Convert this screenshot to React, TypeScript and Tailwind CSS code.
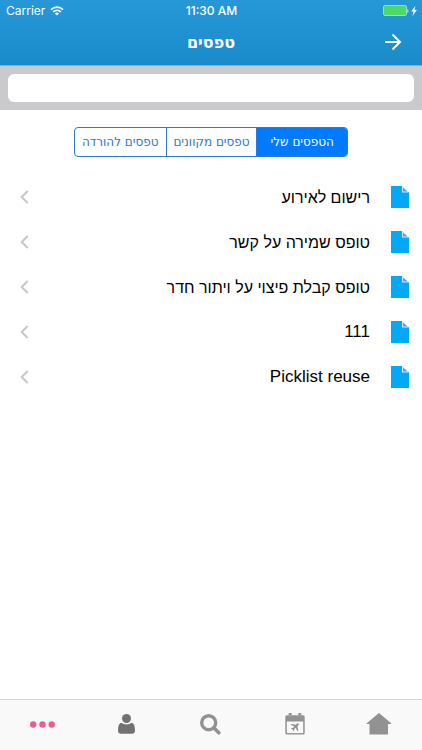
import { useState } from "react"

const tabs = ["הטפסים שלי", "טפסים מקוונים", "טפסים להורדה"]

const forms = [
    { name: "רישום לאירוע", hebrew: true },
    { name: "טופס שמירה על קשר", hebrew: true },
    { name: "טופס קבלת פיצוי על ויתור חדר", hebrew: true },
    { name: "111", hebrew: false },
    { name: "Picklist reuse", hebrew: false },
]

const StatusBar = () => {
    return (
        <div dir="ltr" className="grid grid-cols-3 items-center h-[22px] pl-[6px] pr-[5px] text-xs font-['Inter',sans-serif]">
            <div className="flex items-center gap-[5px]">
                <span>Carrier</span>
                <svg width="14" height="10" viewBox="0 0 14 10" fill="none" stroke="currentColor" strokeWidth="1.6">
                    <path d="M1 3.6C4.4 .3 9.6 .3 13 3.6" />
                    <path d="M3.2 5.9C5.4 3.8 8.6 3.8 10.8 5.9" />
                    <path d="M7 9.6 4.9 7.4C6.1 6.3 7.9 6.3 9.1 7.4Z" fill="currentColor" stroke="none" />
                </svg>
            </div>
            <span className="text-center font-medium">11:30 AM</span>
            <div className="flex items-center justify-end gap-[2px]">
                <svg width="26" height="12" viewBox="0 0 26 12">
                    <rect x=".5" y=".5" width="23" height="10" rx="1.5" fill="#4cd964" stroke="#9ad7d8" />
                    <path d="M24.4 4v4c1.4-.5 1.4-3.500 0-4Z" fill="#d5edf8" />
                </svg>
                <svg width="6" height="10" viewBox="0 0 6 10" fill="currentColor">
                    <path d="M4.300 0 .2 5.600h2.200L1.500 10 5.800 4.100H3.500Z" />
                </svg>
            </div>
        </div>
    )
}

const Header = () => {
    return (
        <header className="h-[66px] bg-linear-to-b from-[#2798d7] to-[#1a8bca] border-b border-[#6fb6e0] text-white">
            <StatusBar />
            <div className="grid grid-cols-[40px_1fr_40px] items-center h-10 px-3">
                <button aria-label="חזרה" className="flex justify-start pr-2">
                    <svg width="18" height="18" viewBox="0 0 18 18" fill="none" stroke="currentColor" strokeWidth="2">
                        <path d="M1 9h15M8.500 1.500 16 9l-7.500 7.500" />
                    </svg>
                </button>
                <h1 className="pt-[2px] text-center text-base font-bold font-['DejaVu_Sans',sans-serif]">טפסים</h1>
            </div>
        </header>
    )
}

const FileIcon = () => {
    return (
        <svg width="18" height="22" viewBox="0 0 18 22" className="shrink-0">
            <path d="M0 0h11v6h7v16H0Z" fill="#03a9f4" />
            <path d="M11 0v6.500h7Z" fill="#d3e6f8" />
            <path d="M12 1.500V5.500h4.500Z" fill="#5b9fe0" />
        </svg>
    )
}

const FormRow = (props: { name: string; hebrew: boolean }) => {
    return (
        <li>
            <button className="flex items-center w-full h-[45px] pr-[13px] pl-5 gap-[21px] text-right">
                <FileIcon />
                <span className={props.hebrew ? "grow pt-[2px] text-base" : "grow text-[17px]"}>{props.name}</span>
                <svg width="9" height="14" viewBox="0 0 9 14" fill="none" stroke="#c7c7cc" strokeWidth="2">
                    <path d="M7.700 1 1.700 7l6 6" />
                </svg>
            </button>
        </li>
    )
}

const TabBar = () => {
    return (
        <nav className="grid grid-cols-5 h-[51px] pb-[2px] pr-px bg-[#f9f9f9] border-t border-[#d6d6d6] text-[#929292]">
            <button aria-label="בית" className="flex items-center justify-center">
                <svg width="26" height="22" viewBox="0 0 26 22" fill="currentColor">
                    <path d="M13 0 .8 10.200q-.6.8.4.8H3.500V21.500h18.500V11h2.800q1 0 .4-.8Z" />
                </svg>
            </button>
            <button aria-label="טיסות" className="flex items-center justify-center">
                <svg width="20" height="22" viewBox="0 0 20 22">
                    <path d="M2 2.200h1.500V1.500a1.700 1.700 0 0 1 3.400 0v.7h6.200v-.7a1.700 1.700 0 0 1 3.400 0v.7H18a1.700 1.700 0 0 1 1.700 1.700v16A1.700 1.700 0 0 1 18 21.600H2A1.700 1.700 0 0 1 .3 19.900v-16A1.700 1.700 0 0 1 2 2.200Z" fill="currentColor" />
                    <path d="M4.300 1.500v2M6.300 1.500v2M13.700 1.500v2M15.700 1.500v2" stroke="#d0d0d0" strokeWidth=".5" />
                    <path d="M1.800 8.500h16.400v11.600H1.800Z" fill="#f9f9f9" />
                    <path d="M13.600 10.600c-.6-.6-1.300-.2-1.800.2l-1 1-4.200-.9-.8.8 3.500 1.800-1.500 1.600-1.300-.2-.6.6 1.700 1 1 1.700.6-.6-.1-1.300 1.600-1.500 1.800 3.500.8-.8-.9-4.200 1-1c.4-.5.800-1.100.2-1.700Z" fill="currentColor" />
                </svg>
            </button>
            <button aria-label="חיפוש" className="flex items-center justify-center">
                <svg width="21" height="21" viewBox="0 0 21 21" fill="none" stroke="currentColor">
                    <circle cx="8.700" cy="8.700" r="7" strokeWidth="3.400" />
                    <path d="m14 14 4.800 4.800" strokeWidth="3.600" strokeLinecap="round" />
                </svg>
            </button>
            <button aria-label="פרופיל" className="flex items-center justify-center text-[#727272]">
                <svg width="17" height="20" viewBox="0 0 17 20" fill="currentColor">
                    <circle cx="8.500" cy="4.500" r="4.500" />
                    <path d="M3.600 8.800C1 9.200 0 12 0 16.500 0 18.500 1 19.800 3 19.800h11c2 0 3-1.300 3-3.300 0-4.500-1-7.300-3.600-7.700C10.800 11 6.200 11 3.600 8.800Z" />
                </svg>
            </button>
            <button aria-label="עוד" className="flex items-center justify-center text-[#e8608c]">
                <svg width="25" height="7" viewBox="0 0 25 7" fill="currentColor">
                    <circle cx="3.200" cy="3.500" r="3.200" />
                    <circle cx="12.500" cy="3.500" r="3.200" />
                    <circle cx="21.700" cy="3.500" r="3.200" />
                </svg>
            </button>
        </nav>
    )
}

const App = () => {
    const [active, setActive] = useState(0)

    return (
        <div dir="rtl" className="flex flex-col min-h-screen bg-white text-black font-['Liberation_Sans',Arial,sans-serif]">
            <Header />
            <div className="bg-[#c9c9ce] px-2 py-2">
                <input type="search" aria-label="חיפוש טפסים" className="block w-full h-7 px-2 rounded-md bg-white text-sm outline-none" />
            </div>
            <main className="grow">
                <div className="grid grid-cols-3 w-[65%] h-[30px] mx-auto my-[17px] border border-[#2b78d8] rounded-[4px] overflow-hidden divide-x divide-[#2b78d8] text-xs font-['DejaVu_Sans',sans-serif]">
                    {tabs.map((tab, i) => (
                        <button
                            key={tab}
                            aria-pressed={active === i}
                            onClick={() => setActive(i)}
                            className={active === i ? "bg-[#007aff] text-white" : "text-[#2b78d8]"}
                        >
                            {tab}
                        </button>
                    ))}
                </div>
                <ul>
                    {forms.map((form) => (
                        <FormRow key={form.name} name={form.name} hebrew={form.hebrew} />
                    ))}
                </ul>
            </main>
            <TabBar />
        </div>
    )
}

export default App
